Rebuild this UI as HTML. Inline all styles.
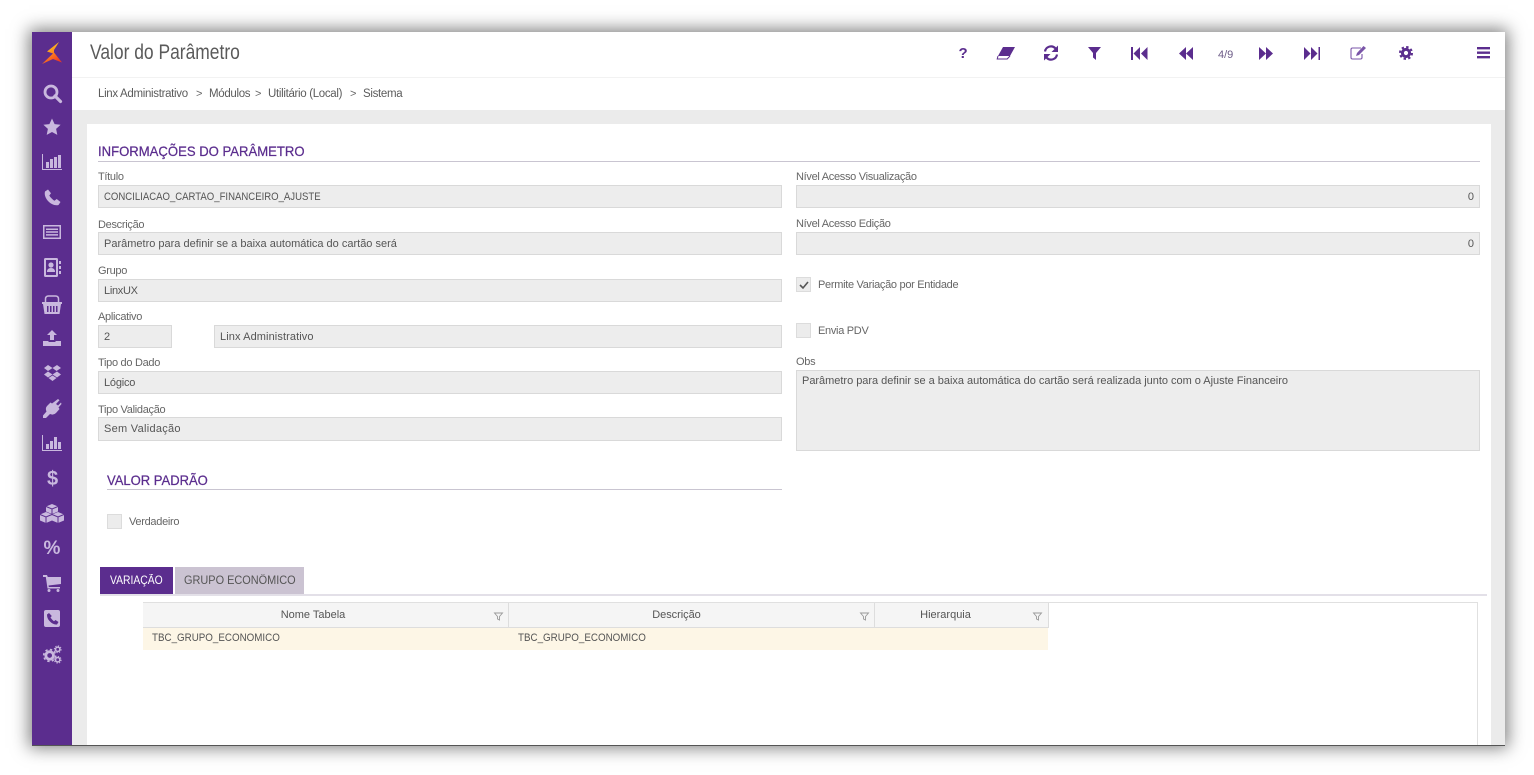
<!DOCTYPE html>
<html><head><meta charset="utf-8"><style>
html,body{margin:0;padding:0;background:#fff;width:1534px;height:775px;overflow:hidden;font-family:"Liberation Sans",sans-serif}
*{box-sizing:border-box}
.a{position:absolute}
#w{position:absolute;left:32px;top:32px;width:1473px;height:713px;background:#ebebeb;box-shadow:0 0 16px 3px rgba(0,0,0,.5)}
#root{position:absolute;left:0;top:0;width:1534px;height:775px;overflow:hidden}
.t{position:absolute;white-space:nowrap;line-height:14px}
.l{font-size:11px;color:#666;letter-spacing:-.3px}
.i{position:absolute;background:#ededed;border:1px solid #d9d9d9;font-size:11px;color:#555;padding:0 5px;line-height:22px;white-space:nowrap}
.h{position:absolute;font-size:14px;color:#5b2d8e;white-space:nowrap;line-height:16px;-webkit-text-stroke:.25px #5b2d8e;transform-origin:0 50%}
.c{position:absolute;width:15px;height:15px;background:#ececec;border:1px solid #dcdcdc}
.b{font-size:11.500px;color:#5c5c5c;letter-spacing:-.32px}
.g{font-size:11px;color:#555}
.x{display:inline-block;transform-origin:0 50%}
svg{position:absolute;overflow:visible}
.s{fill:#c9b8de}
.p{fill:#5b2d8e}
</style></head><body><div id="root">
<div id="w"></div>
<div class="a" style="left:32px;top:32px;width:40px;height:713px;background:#5b2d8e"></div>
<div class="a" style="left:72px;top:32px;width:1433px;height:45px;background:#fff"></div>
<div class="a" style="left:72px;top:77px;width:1433px;height:1px;background:#f2f2f2"></div>
<div class="a" style="left:72px;top:78px;width:1433px;height:32px;background:#fff"></div>
<div class="a" style="left:87px;top:124px;width:1404px;height:621px;background:#fff"></div>
<div class="a" style="left:32px;top:745px;width:1473px;height:1px;background:#555"></div>

<!-- logo -->
<svg style="left:42px;top:42px" width="21" height="22" viewBox="0 0 21 22"><defs><linearGradient id="lg" x1="0.2" y1="0.3" x2="0.6" y2="1"><stop offset="0" stop-color="#ffc21f"/><stop offset=".55" stop-color="#f9701f"/><stop offset="1" stop-color="#ee3a24"/></linearGradient></defs><path fill="url(#lg)" d="M17 0L5 9.500l6 2L0 22l11-5 9 3.500-8-10L12 8z"/></svg>

<!-- sidebar icons -->
<svg style="left:43px;top:84px" width="19" height="19" viewBox="0 0 19 19"><circle cx="8" cy="8" r="6" fill="none" stroke="#c9b8de" stroke-width="2.800"/><path d="M12 12l5.500 5.500" stroke="#c9b8de" stroke-width="3.200" stroke-linecap="round"/></svg>
<svg style="left:43px;top:118px" width="18" height="18" viewBox="0 0 18 18"><path class="s" d="M9 .5l2.600 5.600 6 .7-4.500 4.100 1.200 6L9 14l-5.300 2.900 1.200-6L.4 6.800l6-.7z"/></svg>
<svg style="left:42px;top:154px" width="20" height="16" viewBox="0 0 20 16"><path class="s" d="M0 0h1v15h19v1H0zM4 8h3v6H4zM8 5h3v9H8zM12 3h3v11h-3zM16 1h3v13h-3z"/></svg>
<svg style="left:44px;top:189px" width="17" height="17" viewBox="0 0 17 17"><path class="s" d="M4 .5L1 2.500C0 6 2 10 4.500 12.500S11 17 14.500 16l2-3-3.800-3-2.200 1.800C9 11 6 8 5.300 6.500L7 4.300z"/></svg>
<svg style="left:43px;top:225px" width="18" height="14" viewBox="0 0 18 14"><path class="s" fill-rule="evenodd" d="M0 0h18v14H0zM1.500 1.500v11h15v-11zM3 3.500h12v1.500H3zM3 6.300h12v1.500H3zM3 9.100h12v1.500H3z"/></svg>
<svg style="left:44px;top:258px" width="17" height="19" viewBox="0 0 17 19"><path class="s" fill-rule="evenodd" d="M0 1.500Q0 0 1.500 0h11Q14 0 14 1.500v16q0 1.500-1.500 1.500h-11Q0 19 0 17.500zM2 2v15h10V2zM15 3h2v3h-2zM15 8h2v3h-2zM15 13h2v3h-2z"/><circle class="s" cx="7" cy="7" r="2.600"/><path class="s" d="M3 14q0-4 4-4t4 4z"/></svg>
<svg style="left:42px;top:295px" width="20" height="19" viewBox="0 0 20 19"><path fill="none" stroke="#c9b8de" stroke-width="1.500" d="M3.500 8V4q0-3 3-3h7q3 0 3 3v4"/><path class="s" fill-rule="evenodd" d="M0 7h20v2h-1l-1.500 10h-15L1 9H0zM5 11v6h1.500v-6zM8 11v6h1.500v-6zM11 11v6h1.500v-6zM14 11v6h1.500v-6z"/></svg>
<svg style="left:43px;top:330px" width="18" height="16" viewBox="0 0 18 16"><path class="s" d="M9 0l5 5h-3v5H7V5H4zM0 11h5.500v1h7v-1H18v5H0z"/></svg>
<svg style="left:44px;top:365px" width="17" height="16" viewBox="0 0 17 16"><path class="s" d="M4 0l4.500 3L4 6 0 3zM13 0l4 3-4.500 3-4-3zM4 6.500l4.500 3L4 12.500 0 9.500zM13 6.500l4 3-4 3-4.500-3zM4.500 13l4-2.500 4 2.500-4 3z"/></svg>
<svg style="left:43px;top:399px" width="18" height="20" viewBox="0 0 18 20"><path class="s" d="M15 0l1.500 1.200-3.500 3.800 2 1.500L18 3.500l.5 1.500-3 3.500 1 1.500-3.500 4q-2.500 2.500-6 1L3 19H0v-2.500l3.500-4q-1.500-3 .5-5.500l3.500-3.500 1.500 1z"/></svg>
<svg style="left:42px;top:435px" width="20" height="16" viewBox="0 0 20 16"><path class="s" d="M0 0h1v15h19v1H0zM4 9h3v5H4zM8 6h3v8H8zM12 2h3v12h-3zM16 7h3v7h-3z"/></svg>
<div class="t" style="left:47px;top:469px;font-size:20px;line-height:20px;font-weight:bold;color:#c9b8de">$</div>
<svg style="left:40px;top:504px" width="24" height="19" viewBox="0 0 24 19"><path class="s" d="M12 0l6 2.500v5L12 10 6 7.500v-5zM6 8l6 2.500v6L6 19l-6-2.500v-6zM18 8l6 2.500v6L18 19l-6-2.500v-6z"/><path d="M6 2.500l6 2.500 6-2.500M12 5v5M0 10.500l6 2.500 6-2.500M6 13v6M12 10.500l6 2.500 6-2.500M18 13v6" fill="none" stroke="#5b2d8e" stroke-width="1"/></svg>
<div class="t" style="left:43.500px;top:539px;font-size:19px;line-height:20px;font-weight:bold;color:#c9b8de">%</div>
<svg style="left:43px;top:575px" width="18" height="17" viewBox="0 0 18 17"><path class="s" d="M0 0h4l.8 2H18v7L5.500 10.500l.3 1.500H17v1.500H4.500L2.800 2H0z"/><circle class="s" cx="6" cy="15.500" r="1.500"/><circle class="s" cx="15" cy="15.500" r="1.500"/></svg>
<svg style="left:44px;top:610px" width="16" height="17" viewBox="0 0 16 17"><path class="s" fill-rule="evenodd" d="M2 0h12q2 0 2 2v13q0 2-2 2H2q-2 0-2-2V2q0-2 2-2zM5 3L3 4.500c0 3 1 5 3 7s4 3 7 3l1.500-2.500-3-2-1.500 1.200C9 10.500 7 8.500 6.500 7.500L7.800 6z"/></svg>
<svg style="left:43px;top:645px" width="19" height="19" viewBox="0 0 20 20"><circle cx="7" cy="11" r="4" fill="none" stroke="#c9b8de" stroke-width="3"/><circle cx="15.500" cy="4.500" r="2.300" fill="none" stroke="#c9b8de" stroke-width="1.600"/><circle cx="15.500" cy="15.500" r="2.300" fill="none" stroke="#c9b8de" stroke-width="1.600"/><circle cx="7" cy="11" r="6.300" fill="none" stroke="#c9b8de" stroke-width="1.600" stroke-dasharray="2.500 2.450"/><circle cx="15.500" cy="4.500" r="3.600" fill="none" stroke="#c9b8de" stroke-width="1" stroke-dasharray="1.400 1.430"/><circle cx="15.500" cy="15.500" r="3.600" fill="none" stroke="#c9b8de" stroke-width="1" stroke-dasharray="1.400 1.430"/></svg>

<!-- header -->
<div class="t" style="left:90px;top:41px;font-size:21px;line-height:24px;color:#5a5a5a;transform:scaleX(.83);transform-origin:0 0">Valor do Parâmetro</div>
<div class="t b" style="left:98px;top:87px">Linx Administrativo</div>
<div class="t" style="left:196px;top:87px;font-size:11px;color:#666">&gt;</div>
<div class="t b" style="left:209px;top:87px">Módulos</div>
<div class="t" style="left:255px;top:87px;font-size:11px;color:#666">&gt;</div>
<div class="t b" style="left:268px;top:87px">Utilitário (Local)</div>
<div class="t" style="left:350px;top:87px;font-size:11px;color:#666">&gt;</div>
<div class="t b" style="left:363px;top:87px">Sistema</div>

<!-- toolbar -->
<div class="t" style="left:958.500px;top:47px;font-size:15px;font-weight:bold;color:#5b2d8e">?</div>
<svg style="left:997px;top:47px" width="18" height="13" viewBox="0 0 18 13"><path class="p" d="M6 0h12l-5 9H1z"/><path d="M1 9l-.8 3h10L13 9" fill="none" stroke="#5b2d8e"/></svg>
<svg style="left:1043px;top:45px" width="16" height="16" viewBox="0 0 16 16"><path d="M2 6.500A6 6 0 0 1 12.500 3.500M14 9.500A6 6 0 0 1 3.500 12.500" fill="none" stroke="#5b2d8e" stroke-width="2.200"/><path class="p" d="M15 .5V7H8.500zM1 15.500V9h6.500z"/></svg>
<svg style="left:1088px;top:47px" width="13" height="13" viewBox="0 0 13 13"><path class="p" d="M0 0h13L8 6v7L5 10.500V6z"/></svg>
<svg style="left:1131px;top:47px" width="17" height="13" viewBox="0 0 17 13"><path class="p" d="M0 0h2v13H0zM9 0v13L2.500 6.500zM16.500 0v13L10 6.500z"/></svg>
<svg style="left:1179px;top:47px" width="14" height="13" viewBox="0 0 14 13"><path class="p" d="M7 0v13L0 6.500zM14 0v13L7 6.500z"/></svg>
<div class="t" style="left:1218px;top:48px;font-size:11px;color:#6b5a86">4/9</div>
<svg style="left:1259px;top:47px" width="14" height="13" viewBox="0 0 14 13"><path class="p" d="M0 0l7 6.500L0 13zM7 0l7 6.500L7 13z"/></svg>
<svg style="left:1304px;top:47px" width="17" height="13" viewBox="0 0 17 13"><path class="p" d="M0 0l6.500 6.500L0 13zM7 0l6.500 6.500L7 13zM14.500 0h1.500v13h-1.500z"/></svg>
<svg style="left:1350px;top:46px" width="16" height="14" viewBox="0 0 16 14"><path d="M11 2H2.500Q1 2 1 3.500v8Q1 13 2.500 13h8q1.500 0 1.500-1.500V8" fill="none" stroke="#7a55a8" stroke-width="1.100"/><path fill="#7a55a8" d="M13.500 0L16 2 9 9l-3 1 1-3z"/></svg>
<svg style="left:1399px;top:46px" width="14" height="14" viewBox="0 0 14 14"><circle cx="7" cy="7" r="3.600" fill="none" stroke="#5b2d8e" stroke-width="3"/><circle cx="7" cy="7" r="6" fill="none" stroke="#5b2d8e" stroke-width="2" stroke-dasharray="2.400 2.310"/></svg>
<svg style="left:1477px;top:47px" width="13" height="12" viewBox="0 0 13 12"><path class="p" d="M0 0h13v2.400H0zM0 4.500h13v2.400H0zM0 9h13v2.400H0z"/></svg>

<!-- section 1 -->
<div class="h" style="left:98px;top:143px;transform:scaleX(.936)">INFORMAÇÕES DO PARÂMETRO</div>
<div class="a" style="left:98px;top:161px;width:1382px;height:1px;background:#c9c5d1"></div>

<div class="t l" style="left:98px;top:170px">Título</div>
<div class="i" style="left:98px;top:185px;width:684px;height:23px"><span class="x" style="transform:scaleX(.87)">CONCILIACAO_CARTAO_FINANCEIRO_AJUSTE</span></div>
<div class="t l" style="left:98px;top:218px">Descrição</div>
<div class="i" style="left:98px;top:232px;width:684px;height:23px">Parâmetro para definir se a baixa automática do cartão será</div>
<div class="t l" style="left:98px;top:264px">Grupo</div>
<div class="i" style="left:98px;top:279px;width:684px;height:23px;letter-spacing:-.3px">LinxUX</div>
<div class="t l" style="left:98px;top:310px">Aplicativo</div>
<div class="i" style="left:98px;top:325px;width:74px;height:23px">2</div>
<div class="i" style="left:214px;top:325px;width:568px;height:23px;letter-spacing:.1px">Linx Administrativo</div>
<div class="t l" style="left:98px;top:356px">Tipo do Dado</div>
<div class="i" style="left:98px;top:371px;width:684px;height:23px;letter-spacing:-.2px">Lógico</div>
<div class="t l" style="left:98px;top:403px">Tipo Validação</div>
<div class="i" style="left:98px;top:417px;width:684px;height:24px;letter-spacing:.28px">Sem Validação</div>

<div class="t l" style="left:796px;top:170px">Nível Acesso Visualização</div>
<div class="i" style="left:796px;top:185px;width:684px;height:23px;text-align:right">0</div>
<div class="t l" style="left:796px;top:217px">Nível Acesso Edição</div>
<div class="i" style="left:796px;top:232px;width:684px;height:23px;text-align:right">0</div>
<div class="c" style="left:796px;top:277px"></div>
<svg style="left:799px;top:281px" width="10" height="8" viewBox="0 0 10 8"><path d="M1 4l3 3 5-6" fill="none" stroke="#555" stroke-width="1.600"/></svg>
<div class="t l" style="left:818px;top:278px">Permite Variação por Entidade</div>
<div class="c" style="left:796px;top:323px"></div>
<div class="t l" style="left:818px;top:324px">Envia PDV</div>
<div class="t l" style="left:796px;top:355px">Obs</div>
<div class="i" style="left:796px;top:370px;width:684px;height:81px;line-height:20px;letter-spacing:-.02px">Parâmetro para definir se a baixa automática do cartão será realizada junto com o Ajuste Financeiro</div>

<div class="h" style="left:107px;top:472px;transform:scaleX(.93)">VALOR PADRÃO</div>
<div class="a" style="left:107px;top:489px;width:675px;height:1px;background:#c9c5d1"></div>
<div class="c" style="left:107px;top:514px"></div>
<div class="t l" style="left:129px;top:515px">Verdadeiro</div>

<!-- tabs -->
<div class="a" style="left:100px;top:567px;width:73px;height:28px;background:#5b2d8e"></div>
<div class="t" style="left:110px;top:574px;color:#fff;font-size:11.500px;transform:scaleX(.9);transform-origin:0 50%">VARIAÇÃO</div>
<div class="a" style="left:175px;top:567px;width:129px;height:27px;background:#cbc3d2"></div>
<div class="t" style="left:184px;top:574px;color:#555;font-size:11.500px;transform:scaleX(.95);transform-origin:0 50%">GRUPO ECONÔMICO</div>
<div class="a" style="left:100px;top:594px;width:1387px;height:2px;background:#e3e0e8"></div>

<!-- grid -->
<div class="a" style="left:143px;top:602px;width:1335px;height:143px;border-top:1px solid #e0e0e0;border-right:1px solid #e0e0e0"></div>
<div class="a" style="left:143px;top:603px;width:905px;height:25px;background:#f5f5f5;border-bottom:1px solid #ddd"></div>
<div class="a" style="left:143px;top:628px;width:905px;height:22px;background:#fdf6e6"></div>
<div class="a" style="left:508px;top:603px;width:1px;height:25px;background:#ddd"></div>
<div class="a" style="left:874px;top:603px;width:1px;height:25px;background:#ddd"></div>
<div class="a" style="left:1048px;top:603px;width:1px;height:25px;background:#ddd"></div>
<div class="t g" style="left:143px;top:608px;width:340px;text-align:center">Nome Tabela</div>
<div class="t g" style="left:509px;top:608px;width:335px;text-align:center;letter-spacing:-.05px">Descrição</div>
<div class="t g" style="left:875px;top:608px;width:141px;text-align:center">Hierarquia</div>
<svg style="left:494px;top:612px" width="9" height="9" viewBox="0 0 9 9"><path d="M.5 1h8L5.500 4.500V8l-2-1V4.500z" fill="none" stroke="#999" stroke-width=".9"/></svg>
<svg style="left:860px;top:612px" width="9" height="9" viewBox="0 0 9 9"><path d="M.5 1h8L5.500 4.500V8l-2-1V4.500z" fill="none" stroke="#999" stroke-width=".9"/></svg>
<svg style="left:1033px;top:612px" width="9" height="9" viewBox="0 0 9 9"><path d="M.5 1h8L5.500 4.500V8l-2-1V4.500z" fill="none" stroke="#999" stroke-width=".9"/></svg>
<div class="t g" style="left:152px;top:631px;transform:scaleX(.89);transform-origin:0 50%">TBC_GRUPO_ECONOMICO</div>
<div class="t g" style="left:518px;top:631px;transform:scaleX(.89);transform-origin:0 50%">TBC_GRUPO_ECONOMICO</div>
</div></body></html>
